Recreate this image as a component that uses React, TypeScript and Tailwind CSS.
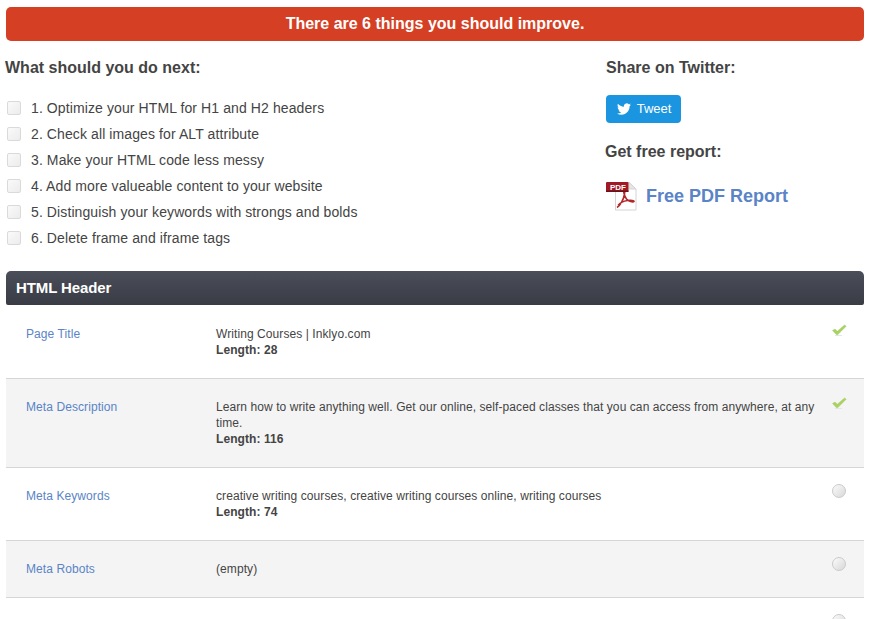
const todo = [
  "1. Optimize your HTML for H1 and H2 headers",
  "2. Check all images for ALT attribute",
  "3. Make your HTML code less messy",
  "4. Add more valueable content to your website",
  "5. Distinguish your keywords with strongs and bolds",
  "6. Delete frame and iframe tags",
];

function Check() {
  return (
    <svg width="15" height="14" viewBox="0 0 15 14">
      <path d="M3 11.5 L10 11.5" stroke="#e6e6e6" strokeWidth="1" />
      <path d="M0.5 6.5 L3 5 L5.3 7.2 L12.5 1 L14.2 2.2 L5.6 10.8 L4.6 10.8 Z" fill="#a9d164" stroke="#9cc957" strokeWidth="0.4" />
    </svg>
  );
}

function Dot() {
  return (
    <span className="block -mt-[2px] w-[14px] h-[14px] rounded-full border border-[#c8ccc8] bg-gradient-to-br from-[#fbfbfb] to-[#d8d8d8]" />
  );
}

function Row({ label, children, ok, alt, h, pt = "pt-5" }: { label: string; children?: React.ReactNode; ok?: boolean; alt?: boolean; h: string; pt?: string }) {
  return (
    <div className={`flex border-b border-[#d6d6d6] text-[12px] leading-4 tracking-[0.08px] ${pt} ${h} ${alt ? "bg-[#f4f4f4]" : "bg-white"}`}>
      <div className="w-[210px] pl-5 text-[#5a84c7] shrink-0">{label}</div>
      <div className="w-[600px] text-[#444] shrink-0">{children}</div>
      <div className="pl-4 -mt-[2px]">{ok ? <Check /> : <Dot />}</div>
    </div>
  );
}

export default function App() {
  return (
    <div className="h-[619px] overflow-hidden bg-white pt-[7px] pl-[6px] pr-[12px] font-['Liberation_Sans',Arial,sans-serif] text-[#444]">
      <div className="h-[34px] rounded-[5px] bg-[#d53f23] flex items-center justify-center text-white font-bold text-[16px]">
        There are 6 things you should improve.
      </div>

      <div className="flex h-[230px]">
        <div className="w-[600px] shrink-0">
          <h2 className="-ml-px mt-[18px] text-[16px] leading-[18px] font-bold">What should you do next:</h2>
          <ul className="mt-[18px]">
            {todo.map((t) => (
              <li key={t} className="flex items-center h-[26px] text-[14px] tracking-[0.1px]">
                <span className="ml-px w-[14px] h-[14px] border border-[#dadada] rounded-[2px] bg-gradient-to-br from-[#fafafa] to-[#ececec] shrink-0" />
                <span className="ml-[10px]">{t}</span>
              </li>
            ))}
          </ul>
        </div>
        <div>
          <h2 className="mt-[18px] text-[16px] leading-[18px] font-bold">Share on Twitter:</h2>
          <button className="mt-[18px] w-[75px] h-[28px] rounded-[4px] bg-[#1b95e0] text-white text-[13px] flex items-center justify-center gap-[5px]">
            <svg width="16" height="14" viewBox="0 0 24 24" fill="#fff">
              <path d="M23.95 4.57a10 10 0 0 1-2.82.77 4.96 4.96 0 0 0 2.16-2.72c-.95.56-2 .96-3.12 1.19a4.92 4.92 0 0 0-8.38 4.48C7.69 8.1 4.07 6.13 1.64 3.16a4.82 4.82 0 0 0-.66 2.47c0 1.71.87 3.21 2.19 4.1a4.9 4.9 0 0 1-2.23-.62v.06a4.92 4.92 0 0 0 3.95 4.83 5 5 0 0 1-2.21.09 4.94 4.94 0 0 0 4.6 3.42A9.87 9.87 0 0 1 0 19.54 14 14 0 0 0 7.56 21.75c9.05 0 14-7.5 14-13.98 0-.21 0-.42-.02-.63a9.94 9.94 0 0 0 2.41-2.57z" />
            </svg>
            Tweet
          </button>
          <h2 className="-ml-px mt-[20px] text-[16px] leading-[18px] font-bold">Get free report:</h2>
          <div className="mt-[20px] flex items-center gap-[9px]">
            <svg width="31" height="30" viewBox="0 0 31 30">
              <path d="M9.5 1.5 H23 L30 8 V29 H9.5 Z" fill="#fff" stroke="#d4d4d4" />
              <path d="M23 1.5 V8 H30 Z" fill="#e6e6e6" stroke="#d4d4d4" />
              <path d="M11 26.5 C14 25 17.5 19 18.5 13 C18.8 11 19 9.5 18.2 9.5 C17.2 9.8 18 14.5 20.5 18 C22.5 20.5 27 21.5 28 20.5 C28.5 19.5 25 19 21.5 19.5 C18 20 14 22 12 24.5" fill="none" stroke="#b0282c" strokeWidth="1.6" />
              <rect x="0" y="1" width="22.5" height="10" rx="1" fill="#a01a25" />
              <rect x="0" y="9.5" width="22.5" height="1.5" fill="#6d1119" />
              <text x="4" y="9" fontSize="8" fontWeight="bold" fill="#fff" fontFamily="Liberation Sans">PDF</text>
            </svg>
            <span className="text-[18px] font-bold text-[#5a84c7]">Free PDF Report</span>
          </div>
        </div>
      </div>

      <div className="h-[34px] flex items-center pl-[10px] rounded-t-[5px] rounded-b-[2px] bg-gradient-to-b from-[#4a4e59] to-[#393c45] text-white font-bold text-[15px] tracking-[-0.1px]">
        HTML Header
      </div>
      <Row label="Page Title" ok h="h-[74px]" pt="pt-[21px]">
        Writing Courses | Inklyo.com
        <div className="font-bold">Length: 28</div>
      </Row>
      <Row label="Meta Description" ok alt h="h-[89px]">
        Learn how to write anything well. Get our online, self-paced classes that you can access from anywhere, at any time.
        <div className="font-bold">Length: 116</div>
      </Row>
      <Row label="Meta Keywords" h="h-[73px]">
        creative writing courses, creative writing courses online, writing courses
        <div className="font-bold">Length: 74</div>
      </Row>
      <Row label="Meta Robots" alt h="h-[57px]">
        (empty)
      </Row>
      <Row label="" h="h-[60px]" />
    </div>
  );
}
